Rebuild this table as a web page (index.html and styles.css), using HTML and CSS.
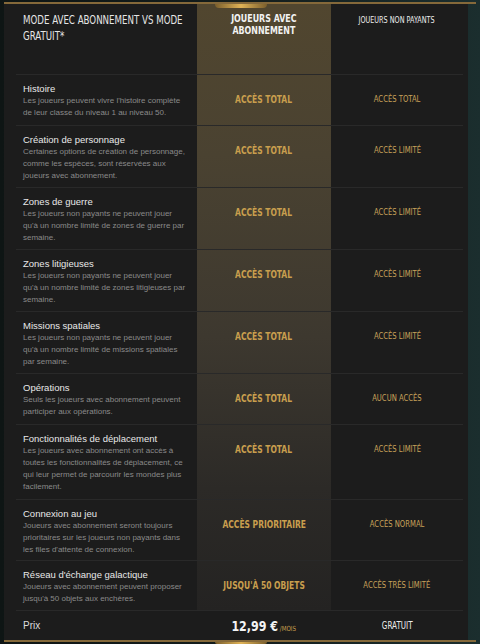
FILE: index.html
```html
<!DOCTYPE html>
<html lang="fr">
<head>
<meta charset="utf-8">
<link rel="stylesheet" href="styles.css">
</head>
<body>
<div class="frame">
  <div class="tab tab-top"></div>
  <div class="panel">
    <div class="grid">
      <div class="h-label cond"><span class="sx-left">MODE AVEC ABONNEMENT VS MODE GRATUIT*</span></div>
      <div class="h-sub cond"><span class="sx">JOUEURS AVEC<br>ABONNEMENT</span></div>
      <div class="h-free cond"><span class="sx">JOUEURS NON PAYANTS</span></div>

      <div class="label"><div class="t">Histoire</div><div class="d">Les joueurs peuvent vivre l'histoire complète de leur classe du niveau 1 au niveau 50.</div></div>
      <div class="sub cond"><span class="sx">ACCÈS TOTAL</span></div>
      <div class="free cond"><span class="sx">ACCÈS TOTAL</span></div>

      <div class="label"><div class="t">Création de personnage</div><div class="d">Certaines options de création de personnage, comme les espèces, sont réservées aux joueurs avec abonnement.</div></div>
      <div class="sub cond"><span class="sx">ACCÈS TOTAL</span></div>
      <div class="free cond"><span class="sx">ACCÈS LIMITÉ</span></div>

      <div class="label"><div class="t">Zones de guerre</div><div class="d">Les joueurs non payants ne peuvent jouer qu'à un nombre limité de zones de guerre par semaine.</div></div>
      <div class="sub cond"><span class="sx">ACCÈS TOTAL</span></div>
      <div class="free cond"><span class="sx">ACCÈS LIMITÉ</span></div>

      <div class="label"><div class="t">Zones litigieuses</div><div class="d">Les joueurs non payants ne peuvent jouer qu'à un nombre limité de zones litigieuses par semaine.</div></div>
      <div class="sub cond"><span class="sx">ACCÈS TOTAL</span></div>
      <div class="free cond"><span class="sx">ACCÈS LIMITÉ</span></div>

      <div class="label"><div class="t">Missions spatiales</div><div class="d">Les joueurs non payants ne peuvent jouer qu'à un nombre limité de missions spatiales par semaine.</div></div>
      <div class="sub cond"><span class="sx">ACCÈS TOTAL</span></div>
      <div class="free cond"><span class="sx">ACCÈS LIMITÉ</span></div>

      <div class="label"><div class="t">Opérations</div><div class="d">Seuls les joueurs avec abonnement peuvent participer aux opérations.</div></div>
      <div class="sub cond"><span class="sx">ACCÈS TOTAL</span></div>
      <div class="free cond"><span class="sx">AUCUN ACCÈS</span></div>

      <div class="label"><div class="t">Fonctionnalités de déplacement</div><div class="d">Les joueurs avec abonnement ont accès à toutes les fonctionnalités de déplacement, ce qui leur permet de parcourir les mondes plus facilement.</div></div>
      <div class="sub cond"><span class="sx">ACCÈS TOTAL</span></div>
      <div class="free cond"><span class="sx">ACCÈS LIMITÉ</span></div>

      <div class="label"><div class="t">Connexion au jeu</div><div class="d">Joueurs avec abonnement seront toujours prioritaires sur les joueurs non payants dans les files d'attente de connexion.</div></div>
      <div class="sub cond"><span class="sx">ACCÈS PRIORITAIRE</span></div>
      <div class="free cond"><span class="sx">ACCÈS NORMAL</span></div>

      <div class="label"><div class="t">Réseau d'échange galactique</div><div class="d">Joueurs avec abonnement peuvent proposer jusqu'à 50 objets aux enchères.</div></div>
      <div class="sub cond"><span class="sx">JUSQU'À 50 OBJETS</span></div>
      <div class="free cond"><span class="sx">ACCÈS TRÈS LIMITÉ</span></div>

      <div class="label price-label"><div class="t">Prix</div></div>
      <div class="price cond"><span class="sx sx-price"><span class="amount">12,99 €</span><span class="per">/MOIS</span></span></div>
      <div class="price-free cond"><span class="sx">GRATUIT</span></div>
    </div>
  </div>
  <div class="tab tab-bottom"></div>
</div>
</body>
</html>
```
FILE: styles.css
```css
html, body {
  margin: 0;
  padding: 0;
}
body {
  width: 480px;
  height: 644px;
  overflow: hidden;
  background: linear-gradient(90deg, #0e1514 0%, #141d1c 50%, #1b2e2e 100%);
  font-family: "Liberation Sans", Arial, sans-serif;
}
.frame {
  position: relative;
  margin: 2px 0 0 4px;
  width: 472px;
  border-top: 2px solid #85693a;
  border-bottom: 2px solid #85693a;
}
.panel {
  width: 464px;
  background: #1c1c1c;
}
.tab {
  position: absolute;
  left: 211px;
  width: 52px;
  height: 4px;
  background: linear-gradient(90deg, #7a5e2c, #e0b356 50%, #7a5e2c);
}
.tab-top {
  top: 0;
  border-radius: 0 0 10px 10px;
}
.tab-bottom {
  bottom: -4px;
  height: 2px;
  border-radius: 0 0 8px 8px;
}
.cond {
  font-family: "DejaVu Sans Condensed", "DejaVu Sans", sans-serif;
}
.sx {
  display: inline-block;
  white-space: nowrap;
  transform: scaleX(0.8);
}
.sx-left {
  display: inline-block;
  width: 226px;
  transform: scaleX(0.74);
  transform-origin: 0 0;
}
.grid {
  margin-left: 12px;
  display: grid;
  grid-template-columns: 181px 134px 132px;
  grid-template-rows: 70px 51px 62px 62px 62px 62px 51px 75px 61px 50px 30px;
  background-image: linear-gradient(180deg, #51462f 0%, #4a4231 25%, #3d382f 55%, #2c2a27 80%, #242322 100%);
  background-repeat: no-repeat;
  background-position: 181px 0;
  background-size: 134px 606px;
}
.h-label {
  padding: 8px 0 0 7px;
  color: #e6e6e6;
  font-size: 13px;
  line-height: 16px;
  overflow: hidden;
}
.h-sub {
  padding-top: 9px;
  text-align: center;
  color: #f2f2f2;
  font-size: 11px;
  font-weight: 700;
  line-height: 12px;
}
.h-free {
  padding-top: 10px;
  text-align: center;
  color: #ececec;
  font-size: 9px;
  line-height: 12px;
}
.label, .sub, .free, .price, .price-free {
  border-top: 1px solid #292929;
}
.label {
  padding: 7px 8px 0 7px;
}
.t {
  color: #e8e8e8;
  font-size: 9.5px;
  line-height: 13px;
}
.d {
  color: #8a8a8a;
  font-size: 8px;
  line-height: 12px;
}
.sub, .free {
  display: flex;
  align-items: flex-start;
  justify-content: center;
  padding-top: 18px;
  line-height: 12px;
  color: #c99f4e;
  text-align: center;
}
.sub {
  font-size: 10.5px;
  font-weight: 700;
}
.free {
  font-size: 9.5px;
  color: #c8a25a;
}
.price-label {
  display: flex;
  align-items: center;
  padding: 0 8px 0 7px;
}
.price-label .t {
  font-size: 10px;
  color: #dcdcdc;
}
.price, .price-free {
  display: flex;
  align-items: center;
  justify-content: center;
}
.sx-price {
  transform: scaleX(0.88);
}
.amount {
  color: #f4f4f4;
  font-size: 14px;
  font-weight: 700;
}
.per {
  margin-left: 2px;
  color: #c99f4e;
  font-size: 7px;
}
.price-free {
  color: #ececec;
  font-size: 10px;
}
```
